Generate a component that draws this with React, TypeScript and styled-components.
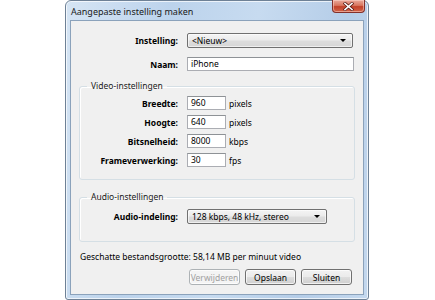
import React from 'react';
import styled, { createGlobalStyle } from 'styled-components';

const GlobalStyle = createGlobalStyle`
  html, body {
    margin: 0;
    padding: 0;
    background: #ffffff;
  }
  body {
    font-family: 'Noto Sans', 'Liberation Sans', sans-serif;
    font-size: 8.5px;
    color: #000;
  }
`;

const Window = styled.div`
  margin-left: 65px;
  width: 304px;
  height: 300px;
  box-sizing: border-box;
  border: 1px solid #6e8196;
  border-radius: 6px 6px 3px 3px;
  background: linear-gradient(100deg, #d6e5f4 0%, #bcd3ec 30%, #c7dbf0 55%, #b5cde8 80%, #c4d8ee 100%);
  display: flex;
  flex-direction: column;
  padding: 0 4px 4px 4px;
  box-shadow: inset 0 0 0 1px rgba(255, 255, 255, 0.7);
`;

const TitleBar = styled.div`
  height: 19px;
  display: flex;
  align-items: flex-start;
  justify-content: space-between;
`;

const Title = styled.span`
  padding: 4px 0 0 1px;
  font-size: 9px;
  color: #1a1a1a;
`;

const CloseButton = styled.div`
  width: 33px;
  height: 13px;
  margin-right: -1px;
  margin-top: -1px;
  box-sizing: border-box;
  border: 1px solid #83302a;
  border-top: none;
  border-radius: 0 0 4px 4px;
  background: linear-gradient(180deg, #e9a99b 0%, #d9765f 45%, #c24129 55%, #d2644a 100%);
  display: flex;
  align-items: center;
  justify-content: center;
  box-shadow: inset 0 0 0 1px rgba(255, 220, 210, 0.5);
`;

const Client = styled.div`
  flex: 1;
  box-sizing: border-box;
  border: 1px solid #8ba2bb;
  background: #f0f0f0;
  padding: 12px 8px 0 8px;
  display: flex;
  flex-direction: column;
`;

const FormRow = styled.div<{ $labelWidth: number; $top?: number }>`
  display: grid;
  grid-template-columns: ${(p) => p.$labelWidth}px auto 1fr;
  column-gap: 9px;
  align-items: center;
  margin-top: ${(p) => p.$top ?? 0}px;
`;

const Label = styled.label`
  font-weight: bold;
  text-align: right;
  white-space: nowrap;
`;

const Unit = styled.span`
  margin-left: -6px;
`;

const TextInput = styled.div<{ $width: number }>`
  width: ${(p) => p.$width}px;
  height: 14px;
  box-sizing: border-box;
  border: 1px solid #abadb3;
  border-top-color: #8e9296;
  background: #fff;
  padding: 0 3px;
  line-height: 12px;
  white-space: nowrap;
`;

const Select = styled.div<{ $width: number }>`
  width: ${(p) => p.$width}px;
  height: 15px;
  box-sizing: border-box;
  border: 1px solid #707070;
  border-radius: 2px;
  background: linear-gradient(180deg, #f4f4f4 0%, #ebebeb 48%, #dddddd 52%, #d6d6d6 100%);
  display: flex;
  align-items: center;
  justify-content: space-between;
  padding: 0 6px 0 4px;
  line-height: 13px;
  box-shadow: inset 0 0 0 1px rgba(255, 255, 255, 0.6);
`;

const Arrow = styled.span`
  width: 0;
  height: 0;
  border-left: 3px solid transparent;
  border-right: 3px solid transparent;
  border-top: 3px solid #000;
`;

const Group = styled.fieldset<{ $height: number; $top: number }>`
  margin: ${(p) => p.$top}px 0 0 0;
  height: ${(p) => p.$height}px;
  box-sizing: border-box;
  border: 1px solid #d5dfe5;
  border-radius: 3px;
  padding: 0;
  box-shadow: inset 1px 1px 0 #fff;
  min-width: 0;
`;

const Legend = styled.legend`
  margin-left: 7px;
  padding: 0 4px;
  color: #1a1a1a;
  line-height: 12px;
`;

const Estimate = styled.div`
  margin: 9px 0 0 1px;
`;

const ButtonBar = styled.div`
  display: flex;
  justify-content: flex-end;
  gap: 5px;
  margin: 7px 3px 0 0;
`;

const Button = styled.button<{ $disabled?: boolean }>`
  width: 51px;
  height: 16px;
  box-sizing: border-box;
  font: inherit;
  padding: 0;
  border-radius: 3px;
  border: 1px solid ${(p) => (p.$disabled ? '#adb2b5' : '#707070')};
  color: ${(p) => (p.$disabled ? '#a0a0a0' : '#000')};
  background: ${(p) =>
    p.$disabled
      ? '#f4f4f4'
      : 'linear-gradient(180deg, #f2f2f2 0%, #ebebeb 48%, #dddddd 52%, #cfcfcf 100%)'};
  box-shadow: inset 0 0 0 1px rgba(255, 255, 255, 0.7);
`;

const CloseIcon = () => (
  <svg width="11" height="9" viewBox="0 0 11 9">
    <path d="M2 1.5 L9 7.5 M9 1.5 L2 7.5" stroke="#5a1a14" strokeWidth="3" strokeLinecap="square" />
    <path d="M2 1.5 L9 7.5 M9 1.5 L2 7.5" stroke="#ffffff" strokeWidth="1.6" strokeLinecap="square" />
  </svg>
);

const videoRows = [
  { label: 'Breedte:', value: '960', unit: 'pixels' },
  { label: 'Hoogte:', value: '640', unit: 'pixels' },
  { label: 'Bitsnelheid:', value: '8000', unit: 'kbps' },
  { label: 'Frameverwerking:', value: '30', unit: 'fps' },
];

const App = () => {
  return (
    <>
      <GlobalStyle />
      <Window>
        <TitleBar>
          <Title>Aangepaste instelling maken</Title>
          <CloseButton>
            <CloseIcon />
          </CloseButton>
        </TitleBar>
        <Client>
          <FormRow $labelWidth={99}>
            <Label>Instelling:</Label>
            <Select $width={166}>
              <span>&lt;Nieuw&gt;</span>
              <Arrow />
            </Select>
          </FormRow>
          <FormRow $labelWidth={99} $top={9}>
            <Label>Naam:</Label>
            <TextInput $width={167}>iPhone</TextInput>
          </FormRow>

          <Group $top={9} $height={100}>
            <Legend>Video-instellingen</Legend>
            {videoRows.map((row, i) => (
              <FormRow key={row.label} $labelWidth={98} $top={i === 0 ? 4 : 5}>
                <Label>{row.label}</Label>
                <TextInput $width={39}>{row.value}</TextInput>
                <Unit>{row.unit}</Unit>
              </FormRow>
            ))}
          </Group>

          <Group $top={11} $height={51}>
            <Legend>Audio-instellingen</Legend>
            <FormRow $labelWidth={98} $top={6}>
              <Label>Audio-indeling:</Label>
              <Select $width={140}>
                <span>128 kbps, 48 kHz, stereo</span>
                <Arrow />
              </Select>
            </FormRow>
          </Group>

          <Estimate>Geschatte bestandsgrootte: 58,14 MB per minuut video</Estimate>

          <ButtonBar>
            <Button $disabled>Verwijderen</Button>
            <Button>Opslaan</Button>
            <Button>Sluiten</Button>
          </ButtonBar>
        </Client>
      </Window>
    </>
  );
};

export default App;
